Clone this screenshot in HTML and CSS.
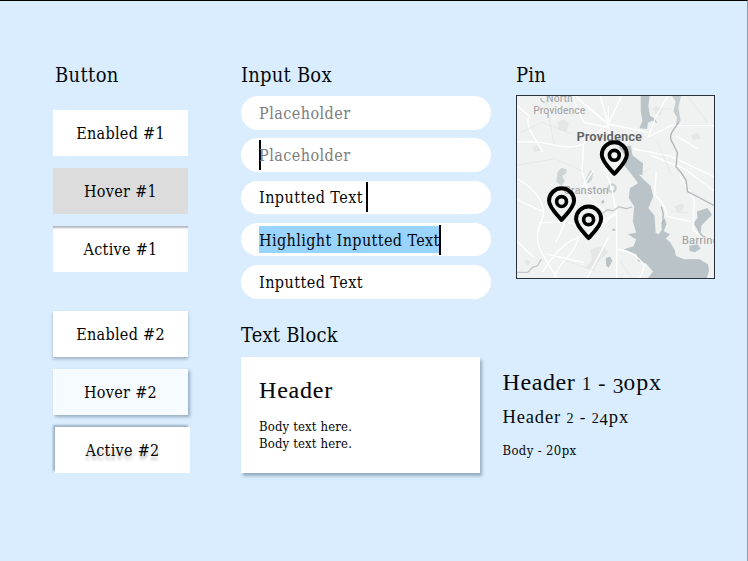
FILE: index.html
```html
<!DOCTYPE html>
<html lang="en">
<head>
<meta charset="utf-8">
<title>Components</title>
<link rel="stylesheet" href="styles.css">
</head>
<body>
<main class="sheet">
  <section class="buttons">
    <h2 class="title">Button</h2>
    <div class="group">
      <button class="btn">Enabled #1</button>
      <button class="btn hover1">Hover #1</button>
      <button class="btn active1">Active #1</button>
    </div>
    <div class="group second">
      <button class="btn enabled2">Enabled #2</button>
      <button class="btn hover2">Hover #2</button>
      <button class="btn active2">Active #2</button>
    </div>
  </section>
  <section class="fields">
    <h2 class="title">Input Box</h2>
    <div class="inputs">
      <div class="input muted"><span>Placeholder</span></div>
      <div class="input muted"><i class="caret start"></i><span>Placeholder</span></div>
      <div class="input"><span>Inputted Text</span><i class="caret gap"></i></div>
      <div class="input"><span class="selected">Highlight Inputted Text</span><i class="caret end"></i></div>
      <div class="input"><span>Inputted Text</span></div>
    </div>
    <h2 class="title block-title">Text Block</h2>
    <article class="card">
      <h3 class="card-head">Header</h3>
      <p class="body">Body text here.<br>Body text here.</p>
    </article>
  </section>
  <section class="side">
    <h2 class="title">Pin</h2>
    <svg class="map" viewBox="33 120 597 552" preserveAspectRatio="none">
      <defs>
        <g id="pin">
          <path d="M0 56C-10 44-38 19-38-2A38 38 0 0 1 38-2C38 19 10 44 0 56Z" fill="none" stroke="#000" stroke-width="12" stroke-linejoin="round"/>
          <circle r="15" fill="none" stroke="#000" stroke-width="11"/>
        </g>
      </defs>
      <rect x="33" y="120" width="597" height="552" fill="#f0f1f1"/>
      <g fill="#e5e7e7">
        <path d="M155 200l20-10 15 12-6 25-25-4zM450 150l18 5 4 20-20 3zM560 240l20-10 10 18-22 6zM80 275l15-5 10 15-20 5zM255 585l40-10 15 20-25 22-20 30-25-4 20-28zM510 455l25-10 5 15-20 15zM60 615l15 5-8 15-12-8z"/>
      </g>
      <g fill="#bac4c8">
        <path d="M340 275L378 270L383 300L415 325L413 360L402 357L418 375L438 392L446 425L431 460L450 483L453 535L475 545L496 562L510 585L515 605L540 615L585 614L612 630L615 650L608 672H430L445 652L424 628L400 621L395 600L357 585L386 576L394 555L369 539L394 535L384 500L388 455L372 430L375 400L400 385L378 355L355 328L367 308Z"/>
        <path d="M408 120H435L431 150L436 180L452 190L458 202L444 195L430 201L427 220L404 218L413 195L408 165Z"/>
        <path d="M503 120H530L522 155L529 195L514 213L518 185L507 166L514 137Z" opacity=".8"/>
        <path d="M578 470L610 460L624 480L605 500L592 512L590 535L604 549L590 548L578 523L568 506L580 490ZM470 505L480 490 486 508 478 530 497 539 480 556 462 540 472 526Z"/>
        <path d="M302 612L315 607L322 620L311 641L303 635ZM555 574L580 570L590 583L572 594L556 590Z"/>
        <path d="M152 380L156 350L168 338L183 342L182 355L170 362L178 378L168 392ZM244 368L255 345L264 350L260 374L249 385L239 378Z" opacity=".65"/>
        <circle cx="321" cy="400" r="11" fill="none" stroke="#c8cfd2" stroke-width="7"/>
        <path d="M322 523l9 0 0 6-9 0zM288 440l8-6 2 10-8 3z"/>
      </g>
      <g fill="none" stroke="#fff" stroke-width="4">
        <path d="M33 150L70 180Q60 205 76 230T110 290M33 260Q90 255 145 268T235 265L310 205L430 230M310 205L285 120M310 205L350 120M310 205L240 145M310 205Q275 180 210 120M310 205L315 260L345 350M235 265L230 350L255 430L310 480M310 205V150M200 120L235 200L310 215M385 280L500 303L630 365M430 245L500 210L630 210M430 245L455 180L490 120M515 240L580 280M440 300L540 340L630 408"/>
        <path d="M33 370L70 395Q130 450 107 500T105 590T155 672M33 434L110 470M100 505L180 502L250 520L335 475M335 475V672M335 475L320 400L300 340M335 475Q270 530 215 550T110 655M225 535Q210 585 185 610T145 672M125 600L235 625M335 585Q390 590 420 635L405 672M33 560L85 610M455 350L450 420Q485 450 487 485L560 500M525 360L570 435L567 525L600 555M180 502L150 565M245 672L310 550M265 345L215 420"/>
      </g>
      <g fill="none" stroke="#e1e4e4" stroke-width="2">
        <path d="M33 330L150 310L235 350M120 120L145 268M45 230L110 200L200 235M440 160L500 160M550 120L610 200M415 350L440 340M460 260L500 360M180 620L270 650M345 620L380 672M500 470L550 475"/>
      </g>
      <g fill="none" stroke="#aeb5b8">
        <path d="M523 200L504 227Q492 245 506 265L519 292L515 335L530 352L545 375L550 410L590 431L630 452" stroke-width="4"/>
        <path d="M290 478L307 465L325 468L342 456L365 462L382 456M33 655L65 655L80 640L95 635L107 615" stroke-width="4" stroke="#c2c8ca"/>
        <path d="M105 126Q105 137 117 139M127 173V187M470 455L476 475 475 505" stroke-width="4"/>
      </g>
      <g class="map-text">
        <text x="122" y="137" textLength="80" lengthAdjust="spacingAndGlyphs" class="place">North</text>
        <text x="82" y="174" textLength="158" lengthAdjust="spacingAndGlyphs" class="place">Providence</text>
        <text x="213" y="255" textLength="199" lengthAdjust="spacingAndGlyphs" class="city">Providence</text>
        <text x="174" y="416" textLength="137" lengthAdjust="spacingAndGlyphs" class="place">Cranston</text>
        <text x="532" y="569" textLength="114" lengthAdjust="spacingAndGlyphs" class="place">Barring</text>
      </g>
      <use href="#pin" x="328" y="300"/>
      <use href="#pin" x="168" y="440"/>
      <use href="#pin" x="250" y="495"/>
    </svg>
    <div class="type">
      <h1 class="h1">Header <span class="one">1</span> <span class="dash">-</span> <span class="low">3</span><span class="zero">0</span>px</h1>
      <h2 class="h2">Header <span class="small">2</span> <span class="dash">-</span> <span class="small">2</span><span class="low">4</span>px</h2>
      <p class="sample">Body - 20px</p>
    </div>
  </section>
</main>
</body>
</html>
```
FILE: styles.css
```css
* { box-sizing: border-box; }
body, h1, h2, h3, p { margin: 0; font-weight: 400; }
body {
  background: #d9edff;
  color: #05080c;
  font-family: "DejaVu Serif Condensed", "DejaVu Serif", serif;
  font-stretch: condensed;
}
.sheet {
  display: flex;
  width: 748px;
  height: 561px;
  overflow: hidden;
  border-top: 1px solid #000;
  border-right: 1px solid #8b9dac;
  padding: 62px 0 0 53px;
}
.title { height: 24px; font-size: 20px; line-height: 24px; letter-spacing: .2px; white-space: nowrap; }
.buttons { width: 188px; }
.buttons .title { padding-left: 2px; letter-spacing: .35px; }
.group { display: flex; flex-direction: column; gap: 12px; margin-top: 23px; }
.second { margin-top: 39px; }
.btn {
  width: 135px;
  height: 46px;
  padding: 2px 0 0;
  border: 0;
  background: #fff;
  color: #050505;
  font: 16px/44px "DejaVu Serif Condensed", "DejaVu Serif", serif;
  font-stretch: condensed;
  letter-spacing: .3px;
}
.hover1 { background: #dcdcdc; }
.active1 { box-shadow: inset 0 3px 2px -1px #b4b7ba; }
.enabled2 { box-shadow: 0 2px 3px rgba(60, 80, 100, .38); }
.hover2 { background: #f5fbff; box-shadow: 2px 2px 3px rgba(60, 80, 100, .42); }
.active2 {
  margin-left: 2px;
  box-shadow: -2px -2px 2px rgba(60, 80, 100, .38);
  text-shadow: 0 4px 3px rgba(0, 0, 0, .25);
}
.fields { width: 261.5px; }
.inputs { display: grid; gap: 8.8px; margin-top: 9px; }
.input {
  display: flex;
  align-items: center;
  width: 249.5px;
  height: 33.5px;
  padding-left: 18px;
  border-radius: 17px;
  background: #fff;
  font-size: 16px;
  letter-spacing: .45px;
  line-height: 20px;
  white-space: nowrap;
}
.input span { padding-top: 2px; }
.muted { color: #7d7d7d; }
.caret { width: 2px; height: 30px; background: #000; }
.start { margin-right: -2px; }
.gap { margin-left: 3px; }
.end { margin-left: -.5px; }
.input .selected { height: 27px; padding-top: 1px; line-height: 27px; letter-spacing: .39px; background: #99d3ff; }
.block-title { margin-top: 24px; }
.card {
  width: 239px;
  height: 116px;
  margin-top: 10px;
  padding: 18px;
  background: #fff;
  box-shadow: 2px 3px 3px rgba(60, 80, 100, .42);
}
.card-head { font: 24px/30px "Liberation Serif", serif; letter-spacing: .8px; -webkit-text-stroke: .1px; }
.body { margin-top: 13px; font-size: 13px; line-height: 17px; letter-spacing: .15px; }
.side .title { padding-left: 13.5px; }
.map {
  display: block;
  width: 199px;
  height: 184px;
  margin: 8px 0 0 13.5px;
  border: 1px solid #29323a;
}
.map-text { font-family: Roboto, sans-serif; }
.place { fill: #a0a3a5; font-size: 31px; }
.city { fill: #5e6264; font-size: 36px; font-weight: 500; }
.type { margin-top: 88px; white-space: nowrap; }
.h1 { height: 30px; font: 24px/30px "Liberation Serif", serif; letter-spacing: .6px; }
.h2 { height: 24px; margin-top: 8px; font: 18.5px/24px "Liberation Serif", serif; letter-spacing: .85px; }
.small, .one { font-size: .76em; }
.dash { font-size: .9em; }
.zero { display: inline-block; font-size: .72em; transform: scaleX(1.35); margin: 0 2px 0 1px; }
.low { display: inline-block; line-height: 1; transform: translateY(.14em); font-size: .9em; }
.sample { margin-top: 13px; font-size: 13px; line-height: 18px; letter-spacing: .35px; }
```
